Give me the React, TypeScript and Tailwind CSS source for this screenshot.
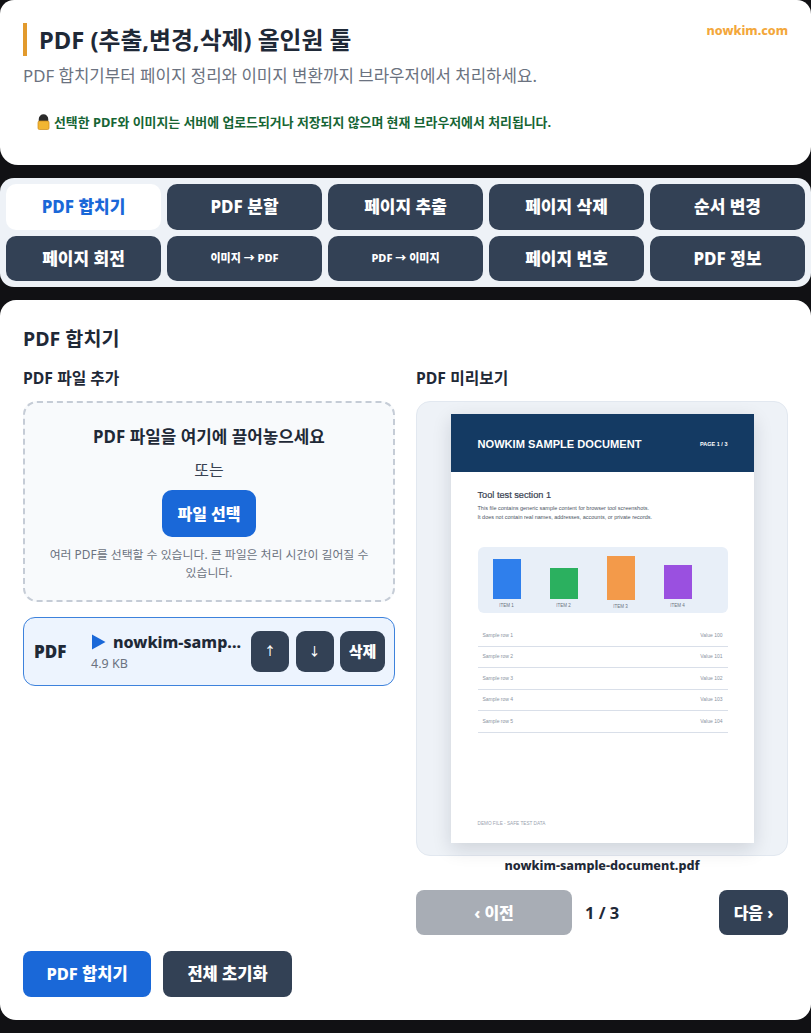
const font = { fontFamily: '"Noto Sans", "Noto Sans CJK KR", sans-serif' }

const tabs = [
  { label: 'PDF 합치기', active: true },
  { label: 'PDF 분할' },
  { label: '페이지 추출' },
  { label: '페이지 삭제' },
  { label: '순서 변경' },
  { label: '페이지 회전' },
  { label: '이미지 → PDF', small: true },
  { label: 'PDF → 이미지', small: true },
  { label: '페이지 번호' },
  { label: 'PDF 정보' },
]

const bars = [
  { name: 'ITEM 1', h: 'h-[40px]', color: 'bg-[#2f7fec]' },
  { name: 'ITEM 2', h: 'h-[31px]', color: 'bg-[#2bb05f]' },
  { name: 'ITEM 3', h: 'h-[44px]', color: 'bg-[#f39a4a]' },
  { name: 'ITEM 4', h: 'h-[34px]', color: 'bg-[#9a50e0]' },
]

const rows = [
  ['Sample row 1', 'Value 100'],
  ['Sample row 2', 'Value 101'],
  ['Sample row 3', 'Value 102'],
  ['Sample row 4', 'Value 103'],
  ['Sample row 5', 'Value 104'],
]

function LockIcon() {
  return (
    <svg width="13" height="16" viewBox="0 0 13 16" className="shrink-0">
      <path d="M2.5 8V5a4 4 0 0 1 8 0v3Z" fill="#2b2b2b" stroke="#2b2b2b" strokeWidth="1.5" />
      <rect x="1" y="7" width="11" height="8.5" rx="1.5" fill="#f2b632" stroke="#d08f1c" strokeWidth="0.75" />
    </svg>
  )
}

function SamplePage() {
  return (
    <div className="w-[303px] h-[429px] bg-white shadow-[0_6px_18px_rgba(15,23,42,0.14)] flex flex-col" style={{ fontFamily: '"Liberation Sans", sans-serif' }}>
      <div className="h-[58px] bg-[#143a63] pl-[27px] pr-[26px] flex items-center justify-between text-white">
        <span className="text-[11.1px] font-bold mt-[2px]">NOWKIM SAMPLE DOCUMENT</span>
        <span className="text-[5.5px] font-bold mt-[3px]">PAGE 1 / 3</span>
      </div>
      <div className="flex-1 pl-[27px] pr-[26px] pt-[17px] pb-[16px] flex flex-col">
        <p className="text-[9.2px] leading-[12px] font-medium text-[#374151] [-webkit-text-stroke:0.2px_#374151]">Tool test section 1</p>
        <p className="text-[5.5px] leading-[9px] text-[#4b5563] mt-[3px]">
          This file contains generic sample content for browser tool screenshots.
          <br />
          It does not contain real names, addresses, accounts, or private records.
        </p>
        <div className="mt-[25px] h-[66px] rounded-[6px] bg-[#e8eff8] pl-[15px] flex items-start gap-[29px] pt-[9px]">
          {bars.map(b => (
            <div key={b.name} className="w-[28px] h-[53px] flex flex-col items-center">
              <div className="h-[44px] w-full flex items-end">
                <div className={`${b.h} w-full ${b.color}`} />
              </div>
              <span className="text-[4.5px] leading-[6px] mt-[4px] text-[#6b7280] whitespace-nowrap">{b.name}</span>
            </div>
          ))}
        </div>
        <div className="mt-[12px]">
          {rows.map(r => (
            <div key={r[0]} className="h-[21.5px] px-[5px] border-b border-[#d9dfe9] flex items-center justify-between text-[5px] text-[#8a93a1]">
              <span>{r[0]}</span>
              <span>{r[1]}</span>
            </div>
          ))}
        </div>
        <p className="mt-auto text-[4.7px] leading-[7px] text-[#9aa3af]">DEMO FILE - SAFE TEST DATA</p>
      </div>
    </div>
  )
}

export default function App() {
  return (
    <div className="w-[811px] h-[1033px] bg-[#111114] overflow-hidden" style={font}>
      {/* 상단 소개 */}
      <header className="h-[165px] bg-white rounded-b-[18px] rounded-t-[14px] px-[23px] pt-[23px] relative">
        <h1 className="border-l-4 border-[#e29a2d] pl-3 h-[33px] flex items-center text-[23.8px] leading-[32px] font-bold text-[#1f2937]">
          PDF (추출,변경,삭제) 올인원 툴
        </h1>
        <p className="mt-[8px] text-[16.8px] leading-[24px] text-[#6b7280]">PDF 합치기부터 페이지 정리와 이미지 변환까지 브라우저에서 처리하세요.</p>
        <div className="mt-[24px] pl-[14px] flex items-center gap-[4px] text-[12.9px] leading-[20px] font-bold text-[#166534]">
          <LockIcon />
          <span>선택한 PDF와 이미지는 서버에 업로드되거나 저장되지 않으며 현재 브라우저에서 처리됩니다.</span>
        </div>
        <span className="absolute right-[23px] top-[22px] text-[12.5px] font-extrabold text-[#f3a73b]">nowkim.com</span>
      </header>

      {/* 도구 탭 */}
      <nav className="mt-[13px] h-[109px] bg-[#eef2f7] rounded-[14px] p-[6px] grid grid-cols-5 grid-rows-2 gap-x-[6px] gap-y-[6px]">
        {tabs.map(t => (
          <button
            key={t.label}
            className={`rounded-[10px] font-extrabold flex items-center justify-center ${t.small ? 'text-[11px]' : 'text-[17px]'} ${t.active ? 'bg-white text-[#1a68d8]' : 'bg-[#334155] text-white'}`}
          >
            {t.label}
          </button>
        ))}
      </nav>

      {/* 작업 영역 */}
      <main className="mt-[13px] h-[720px] bg-white rounded-[16px] px-[23px] pt-[25px]">
        <h2 className="text-[19.6px] leading-[28px] font-bold text-[#1f2937]">PDF 합치기</h2>
        <div className="mt-[14px] grid grid-cols-[372px_372px] gap-x-[21px]">
          <section>
            <h3 className="text-[15.8px] leading-[22px] font-bold text-[#1f2937]">PDF 파일 추가</h3>
            <div className="mt-[12px] h-[201px] rounded-[14px] border-2 border-dashed border-[#c5ccd6] bg-[#f8fafc] px-[22px] pt-[21px] flex flex-col items-center text-center">
              <p className="text-[16.9px] leading-[26px] font-bold text-[#1f2937]">PDF 파일을 여기에 끌어놓으세요</p>
              <p className="mt-[9px] text-[16px] leading-[22px] text-[#374151]">또는</p>
              <button className="mt-[9px] w-[94px] h-[47px] rounded-[10px] bg-[#1a68d8] text-white text-[16px] font-extrabold">파일 선택</button>
              <p className="mt-[8px] text-[11.9px] leading-[18px] text-[#6b7280]">여러 PDF를 선택할 수 있습니다. 큰 파일은 처리 시간이 길어질 수 있습니다.</p>
            </div>
            <div className="mt-[15px] h-[69px] rounded-[12px] border border-[#3d82dc] bg-[#edf4fe] pl-[10px] pr-[9px] flex items-center">
              <span className="w-[57px] text-[17px] font-black text-[#1f2937]">PDF</span>
              <div className="flex-1 min-w-0">
                <p className="text-[16px] leading-[22px] font-extrabold text-[#1f2937] flex items-center gap-[7px] whitespace-nowrap">
                  <svg width="15" height="16" viewBox="0 0 15 16" className="shrink-0"><path d="M1 0.5 L14.5 8 L1 15.5 Z" fill="#1a68d8" /></svg>
                  nowkim-samp...
                </p>
                <p className="text-[12.5px] leading-[18px] text-[#6b7280] mt-[2px]">4.9 KB</p>
              </div>
              <div className="flex gap-[6.5px]">
                <button className="w-[38px] h-[41px] rounded-[9px] bg-[#334155] text-white text-[12px] font-medium">↑</button>
                <button className="w-[38px] h-[41px] rounded-[9px] bg-[#334155] text-white text-[12px] font-medium">↓</button>
                <button className="w-[45px] h-[41px] rounded-[9px] bg-[#334155] text-white text-[15px] font-extrabold">삭제</button>
              </div>
            </div>
          </section>

          <section>
            <h3 className="text-[15.8px] leading-[22px] font-bold text-[#1f2937]">PDF 미리보기</h3>
            <div className="mt-[12px] h-[455px] rounded-[14px] border border-[#e2e8f0] bg-[#eef2f7] pt-[12px] flex justify-center">
              <SamplePage />
            </div>
            <p className="text-center text-[12.6px] leading-[20px] font-extrabold text-[#1f2937]">nowkim-sample-document.pdf</p>
            <div className="mt-[14px] flex items-center">
              <button className="w-[156px] h-[45px] rounded-[8px] bg-[#a8adb5] text-white text-[16px] font-extrabold">‹ 이전</button>
              <span className="ml-[13px] text-[16.5px] leading-[26px] mt-[1px] font-bold text-[#1f2937]">1 / 3</span>
              <button className="ml-auto w-[69px] h-[45px] rounded-[8px] bg-[#334155] text-white text-[16px] font-extrabold">다음 ›</button>
            </div>
          </section>
        </div>
        <div className="mt-[16px] flex gap-[12px]">
          <button className="w-[128px] h-[46px] rounded-[8px] bg-[#1a68d8] text-white text-[16.5px] font-extrabold">PDF 합치기</button>
          <button className="w-[129px] h-[46px] rounded-[8px] bg-[#334155] text-white text-[16.5px] font-extrabold">전체 초기화</button>
        </div>
      </main>
    </div>
  )
}
